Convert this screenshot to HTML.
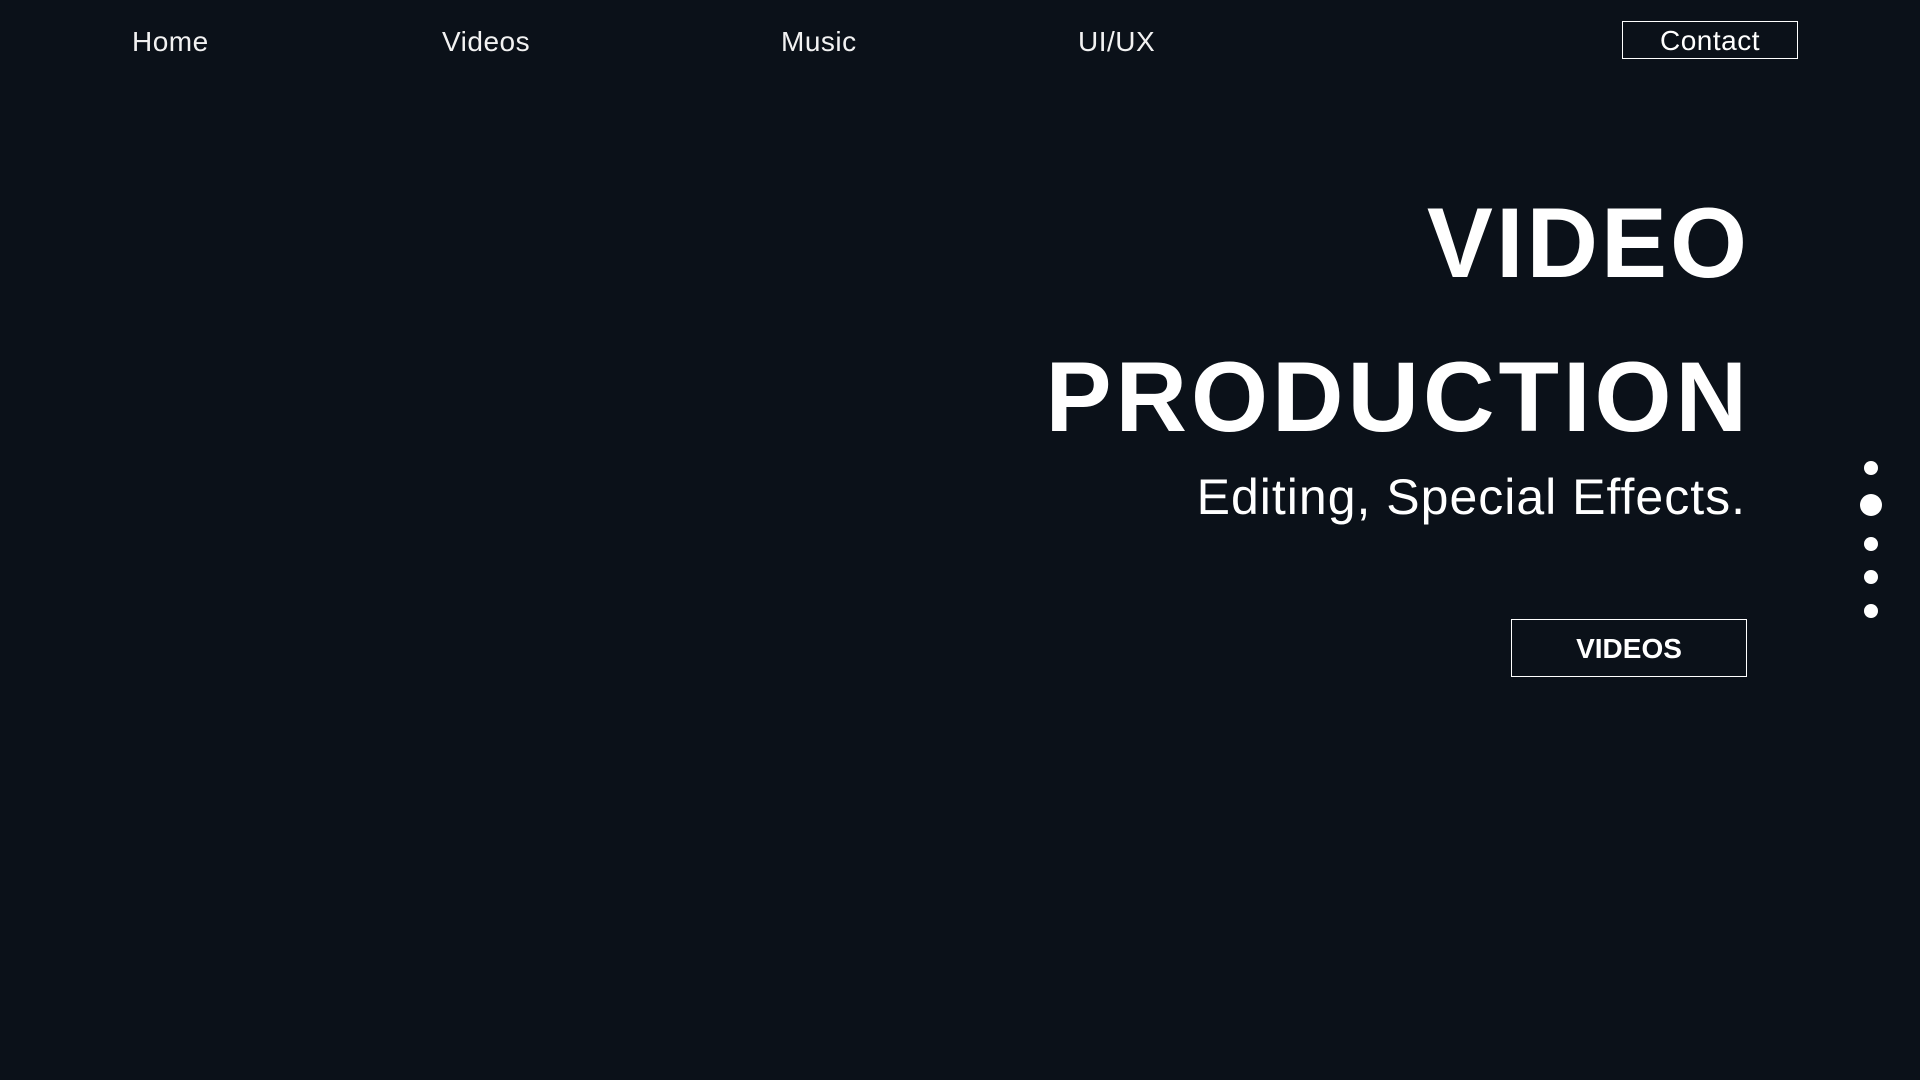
<!DOCTYPE html>
<html><head><meta charset="utf-8"><style>
html,body{margin:0;padding:0}
body{width:1920px;height:1080px;background:#0b1119;color:#fff;font-family:"Liberation Sans",sans-serif;position:relative;overflow:hidden}
.n{position:absolute;top:26px;font-size:28px;font-weight:300;letter-spacing:0.5px;color:#f2f2f2}
.contact{position:absolute;left:1622px;top:21px;width:174px;height:36px;border:1.5px solid #fff;text-align:center;line-height:38px;font-size:28px;letter-spacing:0.5px}
.h{position:absolute;font-weight:bold;white-space:nowrap;font-size:99px}
.sub{position:absolute;right:174px;top:468px;font-size:50px;white-space:nowrap;letter-spacing:1px}
.btn{position:absolute;left:1511px;top:619px;width:234px;height:56px;border:1.5px solid #fff;text-align:center;line-height:58px;font-weight:bold;font-size:28px}
.d{position:absolute;background:#fff;border-radius:50%}
</style></head><body>
<div class="n" style="left:132px">Home</div>
<div class="n" style="left:442px">Videos</div>
<div class="n" style="left:781px">Music</div>
<div class="n" style="left:1078px">UI/UX</div>
<div class="contact">Contact</div>
<div class="h" style="top:186px;right:170px;letter-spacing:3px">VIDEO</div>
<div class="h" style="top:340px;right:169px;letter-spacing:4px">PRODUCTION</div>
<div class="sub">Editing, Special Effects.</div>
<div class="btn">VIDEOS</div>
<div class="d" style="left:1864px;top:461px;width:14px;height:14px"></div>
<div class="d" style="left:1860px;top:494px;width:22px;height:22px"></div>
<div class="d" style="left:1864px;top:537px;width:14px;height:14px"></div>
<div class="d" style="left:1864px;top:570px;width:14px;height:14px"></div>
<div class="d" style="left:1864px;top:604px;width:14px;height:14px"></div>
</body></html>
